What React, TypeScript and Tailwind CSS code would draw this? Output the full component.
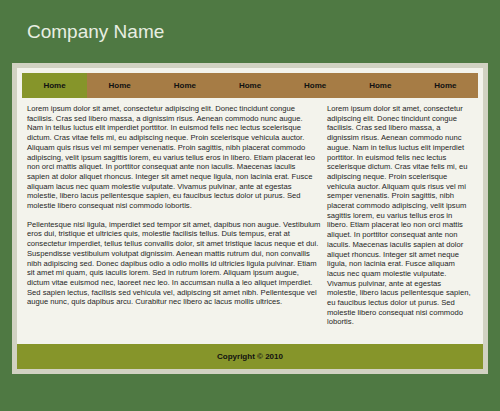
const navItems = ['Home', 'Home', 'Home', 'Home', 'Home', 'Home', 'Home']

const paraOne =
  'Lorem ipsum dolor sit amet, consectetur adipiscing elit. Donec tincidunt congue facilisis. Cras sed libero massa, a dignissim risus. Aenean commodo nunc augue. Nam in tellus luctus elit imperdiet porttitor. In euismod felis nec lectus scelerisque dictum. Cras vitae felis mi, eu adipiscing neque. Proin scelerisque vehicula auctor. Aliquam quis risus vel mi semper venenatis. Proin sagittis, nibh placerat commodo adipiscing, velit ipsum sagittis lorem, eu varius tellus eros in libero. Etiam placerat leo non orci mattis aliquet. In porttitor consequat ante non iaculis. Maecenas iaculis sapien at dolor aliquet rhoncus. Integer sit amet neque ligula, non lacinia erat. Fusce aliquam lacus nec quam molestie vulputate. Vivamus pulvinar, ante at egestas molestie, libero lacus pellentesque sapien, eu faucibus lectus dolor ut purus. Sed molestie libero consequat nisi commodo lobortis.'

const paraTwo =
  'Pellentesque nisi ligula, imperdiet sed tempor sit amet, dapibus non augue. Vestibulum eros dui, tristique et ultricies quis, molestie facilisis tellus. Duis tempus, erat at consectetur imperdiet, tellus tellus convallis dolor, sit amet tristique lacus neque et dui. Suspendisse vestibulum volutpat dignissim. Aenean mattis rutrum dui, non convallis nibh adipiscing sed. Donec dapibus odio a odio mollis id ultricies ligula pulvinar. Etiam sit amet mi quam, quis iaculis lorem. Sed in rutrum lorem. Aliquam ipsum augue, dictum vitae euismod nec, laoreet nec leo. In accumsan nulla a leo aliquet imperdiet. Sed sapien lectus, facilisis sed vehicula vel, adipiscing sit amet nibh. Pellentesque vel augue nunc, quis dapibus arcu. Curabitur nec libero ac lacus mollis ultrices.'

export default function App() {
  return (
    <div className="w-[500px] h-[411px] bg-[#4f7943] font-['Liberation_Sans',Arial,sans-serif] overflow-hidden">
      {/* Header */}
      <div className="pt-[22px] pl-[27px] h-[63px]">
        <h1 className="text-[19px] leading-none text-[#e8eee2]">Company Name</h1>
      </div>

      {/* Page box */}
      <div className="mx-[12px] border-[5px] border-[#d1d2c2] bg-[#f3f3ec]">
        <div className="px-[5px] pt-[5px]">
          <nav className="grid grid-cols-7 h-[25px]">
            {navItems.map((item, i) => (
              <a
                key={i}
                className={`flex items-center justify-center text-[8px] font-bold text-[#111] ${
                  i === 0 ? 'bg-[#86952a]' : 'bg-[#a67c45]'
                }`}
              >
                {item}
              </a>
            ))}
          </nav>

          <div className="flex gap-[6px] pl-[5px] pt-[6px] h-[246px] text-[7.65px] leading-[9.7px] text-[#262626]">
            <div className="w-[294px] shrink-0">
              <p className="mb-[9px] pr-[2px]">{paraOne}</p>
              <p>{paraTwo}</p>
            </div>
            <div className="w-[146px] shrink-0">
              <p>{paraOne}</p>
            </div>
          </div>
        </div>

        <footer className="h-[25px] bg-[#86952a] flex items-center justify-center text-[8px] font-bold text-[#111]">
          Copyright © 2010
        </footer>
      </div>
    </div>
  )
}
